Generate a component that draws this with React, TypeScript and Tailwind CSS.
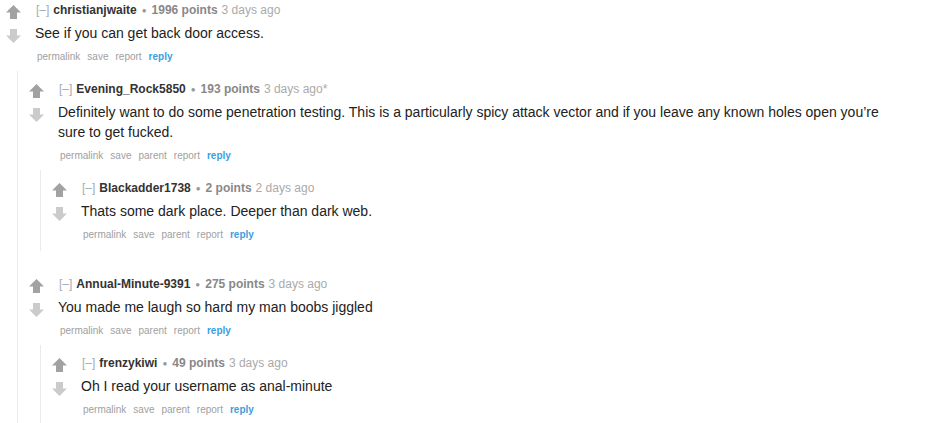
import React from "react";

type C = {
  name: string;
  points: string;
  time: string;
  body: string;
  buttons: string[];
  children?: C[];
};

const data: C = {
  name: "christianjwaite",
  points: "1996 points",
  time: "3 days ago",
  body: "See if you can get back door access.",
  buttons: ["permalink", "save", "report"],
  children: [
    {
      name: "Evening_Rock5850",
      points: "193 points",
      time: "3 days ago*",
      body:
        "Definitely want to do some penetration testing. This is a particularly spicy attack vector and if you leave any known holes open you\u2019re sure to get fucked.",
      buttons: ["permalink", "save", "parent", "report"],
      children: [
        {
          name: "Blackadder1738",
          points: "2 points",
          time: "2 days ago",
          body: "Thats some dark place. Deeper than dark web.",
          buttons: ["permalink", "save", "parent", "report"],
        },
      ],
    },
    {
      name: "Annual-Minute-9391",
      points: "275 points",
      time: "3 days ago",
      body: "You made me laugh so hard my man boobs jiggled",
      buttons: ["permalink", "save", "parent", "report"],
      children: [
        {
          name: "frenzykiwi",
          points: "49 points",
          time: "3 days ago",
          body: "Oh I read your username as anal-minute",
          buttons: ["permalink", "save", "parent", "report"],
        },
      ],
    },
  ],
};

function Arrow({ up }: { up: boolean }) {
  return (
    <svg width="15" height="14" viewBox="0 0 15 14" className="block">
      {up ? (
        <path d="M7.5 0 L15 7.5 L11 7.5 L11 14 L4 14 L4 7.5 L0 7.5 Z" fill="#a2a2a2" />
      ) : (
        <path d="M7.5 14 L15 6.5 L11 6.5 L11 0 L4 0 L4 6.5 L0 6.5 Z" fill="#cbcbcb" />
      )}
    </svg>
  );
}

function Comment({ c, fill }: { c: C; fill?: boolean }) {
  return (
    <div className={fill ? "flex flex-col flex-1" : "flex flex-col"}>
      <div className="flex">
        <div className="flex flex-col pl-[6px] pt-[3px] w-[35px] shrink-0 gap-[10px]">
          <Arrow up />
          <Arrow up={false} />
        </div>
        <div className="flex flex-col min-w-0">
          <div className="text-[12px] leading-[16px] pl-[1px] whitespace-nowrap">
            <span className="text-[#a3acb5]">[–]</span>
            <span className="ml-[4px] font-bold text-[#333]">{c.name}</span>
            <span className="mx-[5px] text-[#999] text-[8px] align-[1px]">●</span>
            <span className="font-bold text-[#888]">{c.points}</span>
            <span className="ml-[4px] text-[#aaa]">{c.time}</span>
          </div>
          <div className="mt-[4px] text-[14px] leading-[20px] text-[#222] max-w-[840px]">
            {c.body}
          </div>
          <div className="mt-[6px] text-[10px] leading-[16px] pl-[2px] flex gap-[7px] whitespace-nowrap">
            {c.buttons.map((b) => (
              <span key={b} className="text-[#a0a0a0]">
                {b}
              </span>
            ))}
            <span className="font-bold text-[#3aa0e0]">reply</span>
          </div>
        </div>
      </div>
      {c.children && (
        <div
          className={
            "ml-[17px] mt-[6px] border-l border-[#eaeaea] pl-[5px] pt-[10px] pb-[8px] flex flex-col gap-[25px]" +
            (fill ? " flex-1" : "")
          }
        >
          {c.children.map((ch) => (
            <Comment key={ch.name} c={ch} />
          ))}
        </div>
      )}
    </div>
  );
}

export default function App() {
  return (
    <div
      className="w-[940px] h-[423px] overflow-hidden bg-white pt-[2px] flex flex-col"
      style={{ fontFamily: '"Liberation Sans", Arial, sans-serif' }}
    >
      <Comment c={data} fill />
    </div>
  );
}
